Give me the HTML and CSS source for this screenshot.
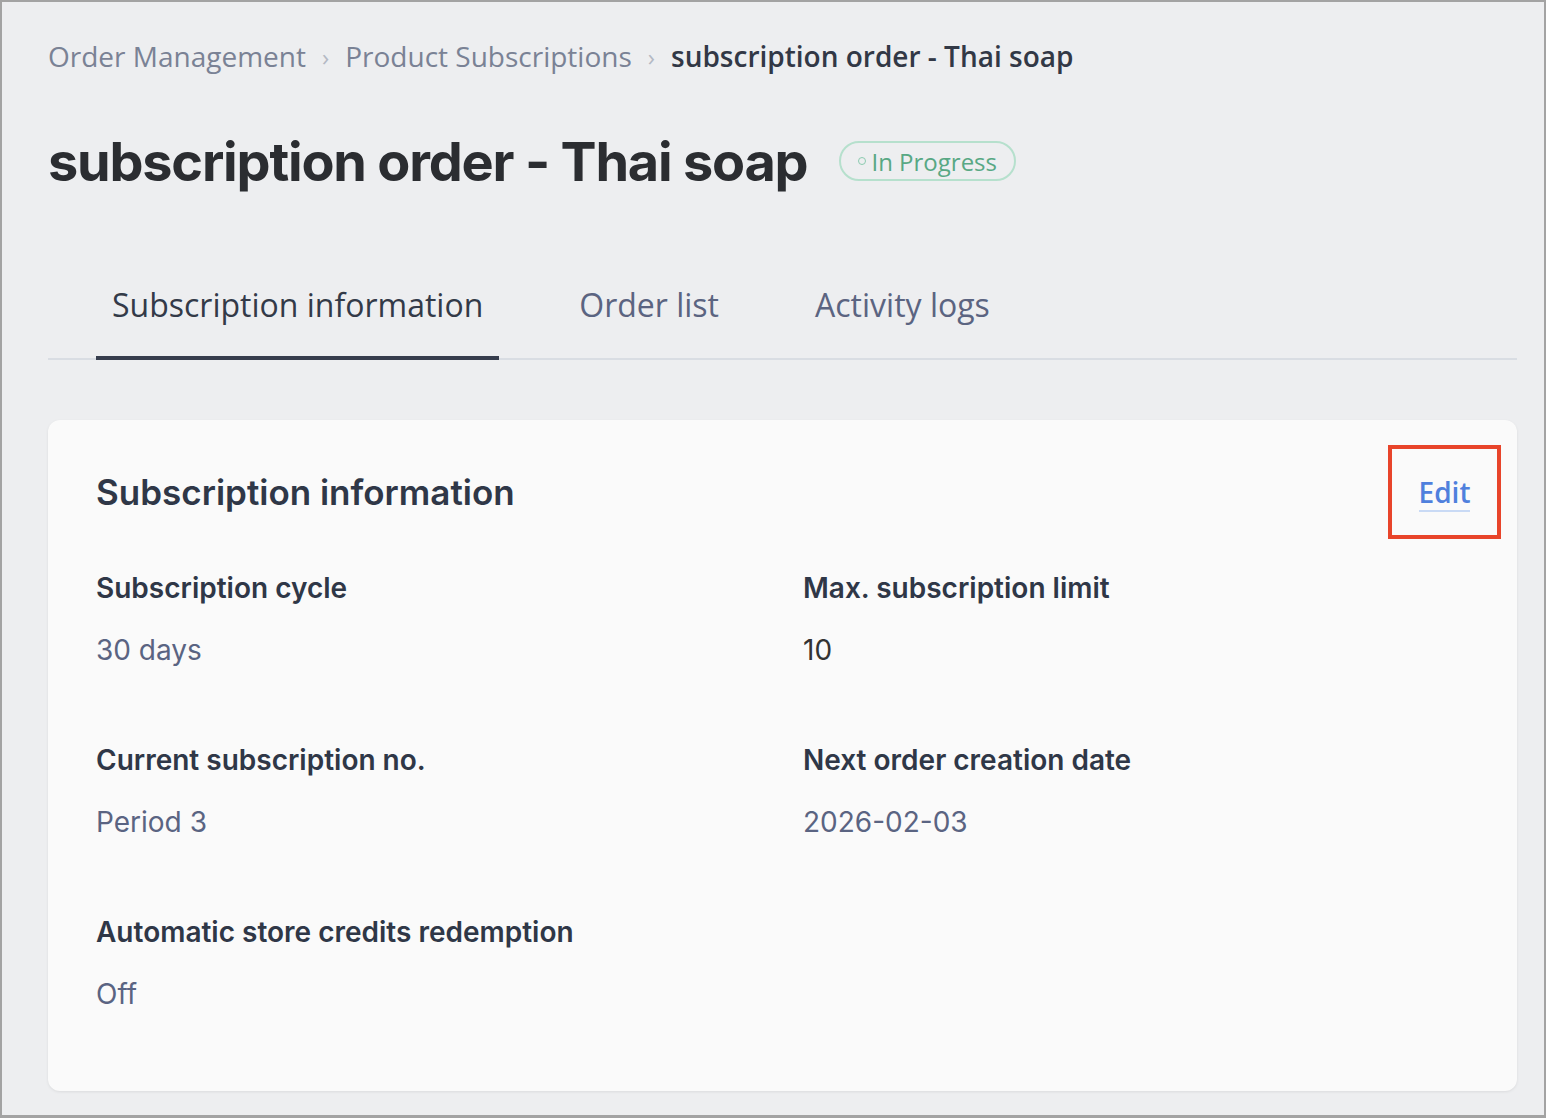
FILE: index.html
```html
<!DOCTYPE html>
<html lang="en">
<head>
<meta charset="utf-8">
<title>subscription order - Thai soap</title>
<link rel="stylesheet" href="styles.css">
</head>
<body>
<div class="frame">
  <nav class="breadcrumb">
    <span class="crumb">Order Management</span>
    <span class="sep">&#8250;</span>
    <span class="crumb">Product Subscriptions</span>
    <span class="sep">&#8250;</span>
    <span class="crumb current">subscription order - Thai soap</span>
  </nav>
  <header class="title-row">
    <h1 class="title">subscription order - Thai soap</h1>
    <span class="badge"><span class="dot"></span>In Progress</span>
  </header>
  <div class="tabs">
    <div class="tab active">Subscription information</div>
    <div class="tab">Order list</div>
    <div class="tab">Activity logs</div>
  </div>
  <section class="card">
    <div class="card-head">
      <h2 class="card-title">Subscription information</h2>
      <div class="edit-box"><a class="edit">Edit</a></div>
    </div>
    <div class="grid">
      <div class="field">
        <div class="label">Subscription cycle</div>
        <div class="value">30 days</div>
      </div>
      <div class="field">
        <div class="label">Max. subscription limit</div>
        <div class="value dark">10</div>
      </div>
      <div class="field">
        <div class="label">Current subscription no.</div>
        <div class="value">Period 3</div>
      </div>
      <div class="field">
        <div class="label">Next order creation date</div>
        <div class="value">2026-02-03</div>
      </div>
      <div class="field">
        <div class="label">Automatic store credits redemption</div>
        <div class="value">Off</div>
      </div>
    </div>
  </section>
</div>
</body>
</html>
```

FILE: styles.css
```css
* { box-sizing: border-box; }
html, body { margin: 0; padding: 0; }
body {
  width: 1546px;
  height: 1118px;
  background: #edeef0;
  font-family: "Open Sans", sans-serif;
  overflow: hidden;
}
.frame {
  width: 1546px;
  height: 1118px;
  border: 2px solid #a3a3a3;
  border-bottom-width: 3px;
  padding: 34px 27px 0 46px;
}
.breadcrumb {
  display: flex;
  align-items: center;
  height: 40px;
  font-size: 28px;
  color: #7a8295;
}
.sep {
  color: #b4b9c4;
  font-size: 24px;
  margin: 0 16px;
}
.crumb.current {
  color: #323846;
  font-weight: 600;
}
.title-row {
  display: flex;
  align-items: center;
  margin-top: 50px;
  height: 70px;
}
.title {
  margin: 0;
  font-family: Inter, sans-serif;
  font-weight: 700;
  font-size: 54px;
  letter-spacing: -1.2px;
  color: #2b2d31;
}
.badge {
  display: inline-flex;
  align-items: center;
  margin-left: 32px;
  height: 40px;
  padding: 0 17px 0 17px;
  border: 2px solid #b6e0cd;
  border-radius: 20px;
  font-size: 24px;
  color: #58a884;
}
.dot {
  width: 8px;
  height: 8px;
  border: 1.5px solid #8ccbb0;
  border-radius: 50%;
  margin-right: 5px;
}
.tabs {
  display: flex;
  margin-top: 67px;
  border-bottom: 2px solid #d9dde3;
  padding-left: 48px;
  height: 97px;
}
.tab {
  font-size: 32px;
  color: #5b6481;
  padding: 0 16px;
  height: 97px;
  padding-top: 20px;
  margin-right: 64px;
}
.tab.active {
  color: #333a48;
  border-bottom: 4px solid #363d4d;
  margin-bottom: -2px;
}
.card {
  margin-top: 60px;
  width: 1469px;
  height: 671px;
  background: #fafafa;
  border-radius: 12px;
  box-shadow: 0 1px 3px rgba(0,0,0,0.08);
  padding: 25px 16px 0 48px;
}
.card-head {
  display: flex;
  justify-content: space-between;
  align-items: center;
  height: 94px;
}
.card-title {
  margin: 0;
  font-family: Inter, sans-serif;
  font-weight: 600;
  font-size: 35px;
  color: #2f3747;
}
.edit-box {
  width: 113px;
  height: 94px;
  border: 4px solid #e8442a;
  display: flex;
  align-items: center;
  justify-content: center;
  padding-top: 2px;
}
.edit {
  font-size: 28px;
  font-weight: 600;
  color: #4f80dd;
  border-bottom: 2px solid #c9daf5;
  line-height: 36px;
}
.grid {
  display: grid;
  grid-template-columns: 707px 1fr;
  row-gap: 74px;
  margin-top: 31px;
}
.label {
  font-family: Inter, sans-serif;
  font-weight: 600;
  font-size: 28px;
  color: #2f3747;
  line-height: 36px;
}
.value {
  font-family: Inter, sans-serif;
  font-size: 28px;
  color: #5a6482;
  margin-top: 26px;
  line-height: 36px;
}
.value.dark { color: #333; }
```
